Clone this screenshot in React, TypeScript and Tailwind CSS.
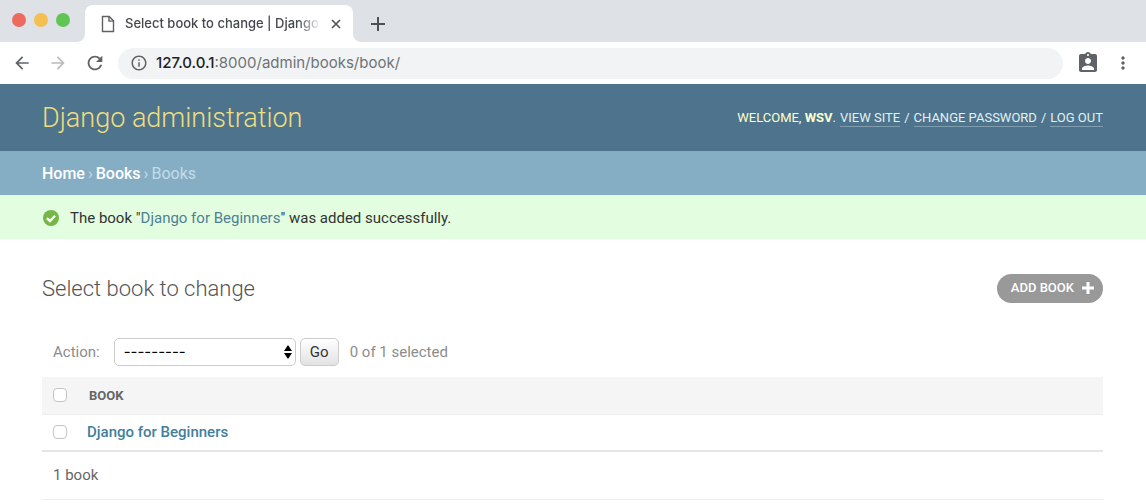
import { useState } from "react";
import {
  MdArrowBack,
  MdArrowForward,
  MdAssignmentInd,
  MdInfoOutline,
  MdMoreVert,
  MdRefresh,
} from "react-icons/md";

function FileIcon() {
  return (
    <svg viewBox="0 0 14 18" className="h-[18px] w-[14px] shrink-0" fill="none" stroke="#5f6368" strokeWidth="1.4" aria-hidden="true">
      <path d="M1.5 1.5h6.7l4.3 4.4v10.6h-11z" />
      <path d="M8 1.5v4.6h4.5" />
    </svg>
  );
}

function TabFlare({ side }: { side: "left" | "right" }) {
  return (
    <svg viewBox="0 0 8 8" className="size-2 self-end" fill="#ffffff" aria-hidden="true">
      {side === "left" ? <path d="M8 0v8H0a8 8 0 0 0 8-8z" /> : <path d="M0 0v8h8a8 8 0 0 1-8-8z" />}
    </svg>
  );
}

function TabStrip() {
  return (
    <div className="flex h-[42px] items-stretch bg-[#dee1e6] font-['Inter',sans-serif]">
      <div className="flex w-[77px] items-center gap-2 pb-[2px] pl-3">
        <span className="size-[14px] rounded-full bg-[#ec6a5e]" />
        <span className="size-[14px] rounded-full bg-[#f4bf4f]" />
        <span className="size-[14px] rounded-full bg-[#61c554]" />
      </div>
      <TabFlare side="left" />
      <div className="mt-[5px] flex w-[268px] items-center rounded-t-lg bg-white pl-4">
        <FileIcon />
        <span className="ml-[10px] w-[196px] text-[13px] font-medium whitespace-nowrap text-[#45484c] [mask-image:linear-gradient(to_right,black_88%,transparent)]">
          Select book to change | Django
        </span>
        <button type="button" aria-label="Close tab" className="ml-[7px] flex size-4 items-center justify-center">
          <svg viewBox="0 0 10 10" className="size-[10px]" stroke="#4d5156" strokeWidth="1.6" aria-hidden="true">
            <path d="M1 1l8 8M9 1l-8 8" />
          </svg>
        </button>
      </div>
      <TabFlare side="right" />
      <button type="button" aria-label="New tab" className="ml-2 flex w-[18px] items-center justify-center pt-[6px]">
        <svg viewBox="0 0 14 14" className="size-[14px]" stroke="#4d5156" strokeWidth="2" aria-hidden="true">
          <path d="M7 0v14M0 7h14" />
        </svg>
      </button>
    </div>
  );
}

function Toolbar() {
  return (
    <div className="flex h-[42px] items-center bg-white pr-[13px] pl-3 text-[#5f6368]">
      <div className="flex items-center gap-4">
        <button type="button" aria-label="Back"><MdArrowBack className="size-5" /></button>
        <button type="button" aria-label="Forward" className="text-[#babcbe]"><MdArrowForward className="size-5" /></button>
        <button type="button" aria-label="Reload"><MdRefresh className="size-[22px]" /></button>
      </div>
      <div className="ml-3 flex h-[31px] grow items-center rounded-full bg-[#f1f3f4] pl-3 font-['Inter',sans-serif] text-[15px]">
        <MdInfoOutline className="size-[18px]" />
        <span className="ml-2 text-[#6f7377]"><span className="font-medium text-[#202124]">127.0.0.1</span>:8000/admin/books/book/</span>
      </div>
      <button type="button" aria-label="Profile" className="ml-[13px]"><MdAssignmentInd className="size-6" /></button>
      <button type="button" aria-label="Menu" className="ml-[13px]"><MdMoreVert className="size-5" /></button>
    </div>
  );
}

const userLink = "border-b border-[#7f9dae] leading-4";

function Header() {
  return (
    <header className="flex h-[67px] items-center justify-between bg-[#4d748c] pt-[2px] pr-[43px] pl-[42px]">
      <h1 className="text-[27px] font-light text-[#f0dd7d]">Django administration</h1>
      <div className="flex gap-1 text-[13px] leading-4 text-[#e4f0f2]">
        <span className="text-[#ffffcc]">WELCOME, <strong className="font-bold">WSV</strong>.</span>
        <a href="#site" className={userLink}>VIEW SITE</a>
        <span>/</span>
        <a href="#password" className={userLink}>CHANGE PASSWORD</a>
        <span>/</span>
        <a href="#logout" className={userLink}>LOG OUT</a>
      </div>
    </header>
  );
}

function Breadcrumbs() {
  return (
    <nav aria-label="Breadcrumbs" className="flex h-11 items-center gap-[3px] bg-[#85aec5] px-[42px] pt-[2px] text-base text-[#c4dce8]">
      <a href="#home" className="font-medium text-white">Home</a>
      <span>›</span>
      <a href="#books" className="font-medium text-white">Books</a>
      <span>›</span>
      <span>Books</span>
    </nav>
  );
}

function Message() {
  return (
    <div role="status" className="flex h-11 items-center gap-[11px] bg-[#e2fddf] px-[43px] pt-[2px] text-[15px] text-[#333333]">
      <svg viewBox="0 0 16 16" className="size-4" aria-hidden="true">
        <circle cx="8" cy="8" r="8" fill="#76b547" />
        <path d="M3.9 8.1l3 3 5.2-5.3" fill="none" stroke="#ffffff" strokeWidth="2.2" />
      </svg>
      <p>The book "<a href="#book" className="text-[#4f7f95]">Django for Beginners</a>" was added successfully.</p>
    </div>
  );
}

const checkbox = "block size-[14px] appearance-none rounded-[4px] border border-[#c4c4c4] bg-white checked:bg-[#4d748c]";

function ChangeList() {
  const [selected, setSelected] = useState(false);
  const toggle = () => setSelected(!selected);
  return (
    <main className="pt-[33px] pr-[43px] pl-[42px]">
      <div className="flex h-8 items-center justify-between">
        <h2 className="text-[22px] font-light text-[#555555]">Select book to change</h2>
        <a href="#add" className="flex h-[29px] items-center gap-2 rounded-full bg-[#999999] pr-[9px] pl-[14px] text-[13px] font-medium text-white">
          ADD BOOK
          <svg viewBox="0 0 12 12" className="size-3" stroke="#ffffff" strokeWidth="3" aria-hidden="true">
            <path d="M6 0v12M0 6h12" />
          </svg>
        </a>
      </div>
      <form className="mt-[34px] flex h-7 items-center pl-[11px] text-[15px] text-[#8c8c8c]" onSubmit={(e) => e.preventDefault()}>
        <label htmlFor="action">Action:</label>
        <div className="relative ml-[14px] w-[182px]">
          <select id="action" className="h-7 w-full appearance-none rounded-[5px] border border-[#cccccc] bg-white pl-[9px] font-['Inter',sans-serif] text-[15px] text-black">
            <option>---------</option>
            <option>Delete selected books</option>
          </select>
          <svg viewBox="0 0 8 14" className="pointer-events-none absolute top-[7px] right-1 h-[14px] w-2" fill="#000000" aria-hidden="true">
            <path d="M4 0l4 6H0zM4 14l4-6H0z" />
          </svg>
        </div>
        <button type="submit" className="ml-1 h-7 w-[39px] rounded-[5px] border border-[#cccccc] bg-linear-to-b from-white to-[#e2e2e2] text-[#333333]">Go</button>
        <span className="ml-[11px]">{selected ? 1 : 0} of 1 selected</span>
      </form>
      <table className="mt-[11px] w-full border-collapse text-left">
        <thead>
          <tr className="h-[37px] border-b border-[#eeeeee] bg-[#f5f5f5]">
            <th scope="col" className="w-[45px] pl-[11px]">
              <input type="checkbox" aria-label="Select all books" checked={selected} onChange={toggle} className={checkbox} />
            </th>
            <th scope="col" className="pl-[2px] text-[13px] font-bold text-[#666666]">BOOK</th>
          </tr>
        </thead>
        <tbody>
          <tr className="h-[37px] border-b-2 border-[#e6e6e6]">
            <td className="pl-[11px]">
              <input type="checkbox" aria-label="Select Django for Beginners" checked={selected} onChange={toggle} className={checkbox} />
            </td>
            <th scope="row" className="text-[15px] font-medium text-[#447e9b]"><a href="#book">Django for Beginners</a></th>
          </tr>
        </tbody>
      </table>
      <p className="flex h-12 items-center border-b border-[#eeeeee] pl-[11px] text-[15px] text-[#666666]">1 book</p>
    </main>
  );
}

export default function App() {
  return (
    <div className="bg-white font-['Roboto',sans-serif]">
      <TabStrip />
      <Toolbar />
      <Header />
      <Breadcrumbs />
      <Message />
      <ChangeList />
    </div>
  );
}
